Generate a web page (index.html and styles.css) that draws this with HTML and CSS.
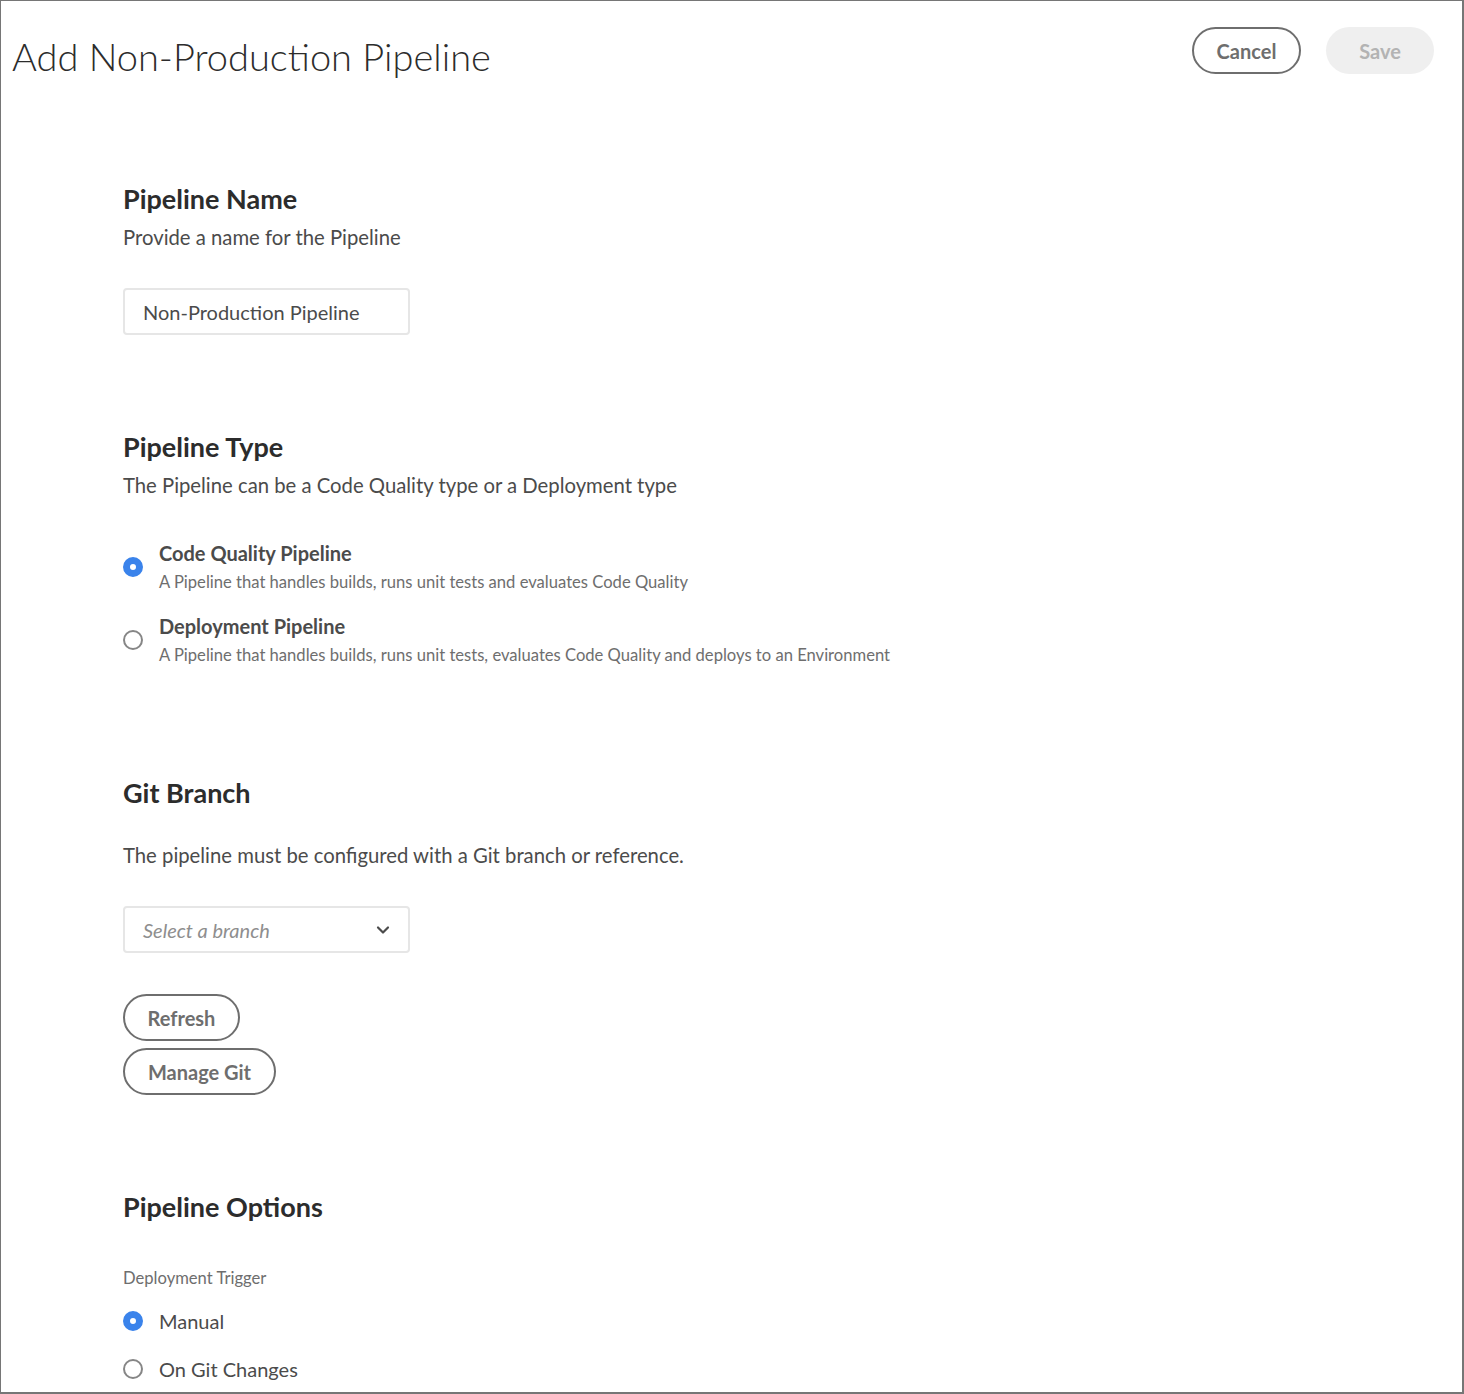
FILE: index.html
```html
<!DOCTYPE html>
<html lang="en">
<head>
<meta charset="utf-8">
<title>Add Non-Production Pipeline</title>
<link rel="stylesheet" href="styles.css">
</head>
<body>
<div class="frame">
  <header class="topbar">
    <h1 class="title">Add Non-Production Pipeline</h1>
    <div class="actions">
      <button class="btn btn-outline btn-cancel">Cancel</button>
      <button class="btn btn-disabled">Save</button>
    </div>
  </header>

  <main class="content">
    <section class="section sec-name">
      <h2 class="heading">Pipeline Name</h2>
      <p class="desc">Provide a name for the Pipeline</p>
      <div class="field input-name">Non-Production Pipeline</div>
    </section>

    <section class="section sec-type">
      <h2 class="heading">Pipeline Type</h2>
      <p class="desc">The Pipeline can be a Code Quality type or a Deployment type</p>
      <div class="radio-list type-list">
        <div class="radio-item">
          <span class="radio checked"></span>
          <div class="radio-text">
            <div class="radio-title">Code Quality Pipeline</div>
            <div class="radio-sub">A Pipeline that handles builds, runs unit tests and evaluates Code Quality</div>
          </div>
        </div>
        <div class="radio-item">
          <span class="radio"></span>
          <div class="radio-text">
            <div class="radio-title">Deployment Pipeline</div>
            <div class="radio-sub">A Pipeline that handles builds, runs unit tests, evaluates Code Quality and deploys to an Environment</div>
          </div>
        </div>
      </div>
    </section>

    <section class="section sec-git">
      <h2 class="heading">Git Branch</h2>
      <p class="desc desc-git">The pipeline must be configured with a Git branch or reference.</p>
      <div class="field select">
        <span class="placeholder">Select a branch</span>
        <svg class="chevron" width="14" height="10" viewBox="0 0 14 10"><path d="M2 2.5 L7 7.5 L12 2.5" fill="none" stroke="#4b4b4b" stroke-width="2.2" stroke-linecap="round" stroke-linejoin="round"/></svg>
      </div>
      <div class="btn-stack">
        <button class="btn btn-outline btn-refresh">Refresh</button>
        <button class="btn btn-outline btn-git">Manage Git</button>
      </div>
    </section>

    <section class="section sec-options">
      <h2 class="heading">Pipeline Options</h2>
      <div class="label">Deployment Trigger</div>
      <div class="simple-radio first">
        <span class="radio checked"></span>
        <span class="simple-label">Manual</span>
      </div>
      <div class="simple-radio">
        <span class="radio"></span>
        <span class="simple-label">On Git Changes</span>
      </div>
    </section>
  </main>
</div>
</body>
</html>
```

FILE: styles.css
```css
* { box-sizing: border-box; }
html, body { margin: 0; padding: 0; background: #fff; }
body {
  font-family: Lato, "Open Sans", "Noto Sans", sans-serif;
  color: #4b4b4b;
}
.frame {
  width: 1464px;
  height: 1394px;
  border: 1px solid #767676;
  border-right-width: 2px;
  border-bottom-width: 2px;
  overflow: hidden;
}
.topbar {
  display: flex;
  justify-content: space-between;
  align-items: flex-start;
  padding: 26px 28px 0 11px;
}
.title {
  margin: 5px 0 3px 0;
  font-size: 38px;
  line-height: 48px;
  font-weight: 300;
  color: #2c2c2c;
}
.actions { display: flex; gap: 25px; }
.btn {
  font-family: inherit;
  height: 47px;
  border-radius: 24px;
  font-size: 20px;
  font-weight: 700;
  padding: 0 22px;
  line-height: 1;
  cursor: pointer;
}
.btn-outline {
  background: #fff;
  border: 2.5px solid #6e6e6e;
  color: #6e6e6e;
}
.btn-cancel { width: 109px; }
.btn-disabled {
  width: 108px;
  background: #efefef;
  border: none;
  color: #b3b3b3;
}
.content { padding-left: 122px; }
.section { display: flex; flex-direction: column; align-items: flex-start; }
.heading {
  margin: 0;
  font-size: 27px;
  line-height: 34px;
  font-weight: 700;
  color: #2c2c2c;
}
.desc {
  margin: 7px 0 0 0;
  font-size: 20.3px;
  line-height: 28px;
}
.sec-name { margin-top: 99px; }
.field {
  width: 287px;
  height: 47px;
  border: 2px solid #e6e6e6;
  border-radius: 4px;
  padding: 0 18px;
  font-size: 20px;
  display: flex;
  align-items: center;
}
.input-name { margin-top: 37px; color: #4b4b4b; }
.sec-type { margin-top: 95px; }
.type-list { margin-top: 41px; display: flex; flex-direction: column; gap: 20px; }
.radio-item { display: flex; align-items: center; gap: 16px; }
.radio {
  flex: none;
  width: 20px;
  height: 20px;
  border-radius: 50%;
  border: 2px solid #868686;
  background: #fff;
}
.radio.checked { border: 7px solid #3a83eb; }
.radio-text { display: flex; flex-direction: column; gap: 5px; }
.radio-title { font-size: 20px; line-height: 26px; font-weight: 700; color: #4b4b4b; }
.radio-sub { font-size: 16.6px; line-height: 22px; color: #6e6e6e; }
.sec-git { margin-top: 110px; }
.desc-git { margin-top: 31px; }
.select { margin-top: 37px; justify-content: space-between; padding-right: 18px; }
.placeholder { font-style: italic; color: #8e8e8e; }
.chevron { display: block; }
.btn-stack { margin-top: 41px; display: flex; flex-direction: column; align-items: flex-start; gap: 7px; }
.btn-refresh { width: 117px; }
.btn-git { width: 153px; }
.sec-options { margin-top: 95px; }
.label { margin-top: 43px; font-size: 16.6px; line-height: 22px; color: #6e6e6e; }
.simple-radio { display: flex; align-items: center; gap: 16px; margin-top: 20px; }
.simple-radio.first { margin-top: 18px; }
.simple-label { font-size: 20px; line-height: 28px; color: #4b4b4b; }
```
